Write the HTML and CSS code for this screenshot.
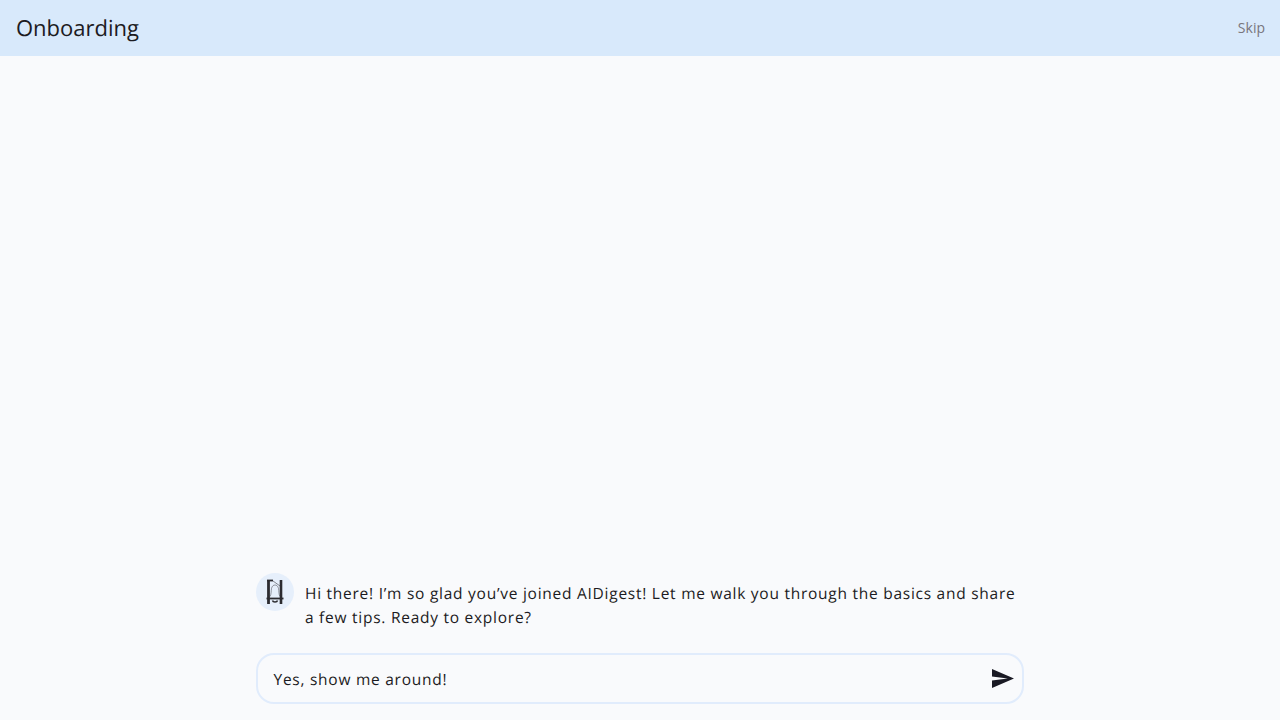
FILE: index.html
```html
<!DOCTYPE html>
<html lang="en">

<head>
    <meta charset="utf-8">
    <meta name="viewport" content="width=device-width, initial-scale=1.0">
    <title>Onboarding</title>
    <link rel="stylesheet" href="styles.css">
</head>

<body>
    <header class="topbar">
        <h1 class="topbar-title">Onboarding</h1>
        <button class="skip">Skip</button>
    </header>

    <main class="chat">
        <div class="message">
            <div class="avatar">
                <svg width="20" height="28" viewBox="0 0 20 28" fill="none" stroke="#2b2b30">
                    <path d="M3.5 2V26" stroke-width="2.8" />
                    <path d="M16 2V26" stroke-width="2.6" />
                    <path d="M2 2.5H8" stroke-width="1.8" />
                    <path d="M8 3L15 8" stroke-width="0.9" opacity="0.6" />
                    <path d="M5 18.5C6.5 16 6 13 6.5 10.5C7 8 8.5 7 10 7C11.5 7 13 8 13.5 10.5C14 13 13.5 16 15 18.5" stroke-width="1" opacity="0.45" />
                    <path d="M1.5 20.5H18.5" stroke-width="1.8" />
                    <path d="M7.5 22.5C8 24.5 12 24.5 12.5 22.5" stroke-width="1.6" />
                </svg>
            </div>
            <p class="message-text">Hi there! I’m so glad you’ve joined AIDigest! Let me walk you through the basics and share a few tips. Ready to explore?</p>
        </div>

        <form class="reply">
            <span class="reply-text">Yes, show me around!</span>
            <svg class="send" width="22" height="19" viewBox="2 3 21 18">
                <path d="M2 21L23 12L2 3V10L17 12L2 14Z" fill="#1a1a24" />
            </svg>
        </form>
    </main>
</body>

</html>
```

FILE: styles.css
```css
* {
    box-sizing: border-box;
}

html,
body {
    height: 100%;
}

body {
    margin: 0;
    display: flex;
    flex-direction: column;
    background-color: #f9fafc;
    color: #1c1b22;
    font-family: "Open Sans", sans-serif;
    text-rendering: geometricPrecision;
}

.topbar {
    display: flex;
    align-items: center;
    justify-content: space-between;
    height: 56px;
    padding: 0 15px 0 16px;
    background-color: #d8e9fb;
}

.topbar-title {
    margin: 0;
    font-size: 22px;
    font-weight: 400;
    line-height: 56px;
}

.skip {
    padding: 0 0 2px;
    border: 0;
    background: none;
    color: #79767d;
    font-family: inherit;
    font-size: 14px;
}

.chat {
    flex: 1;
    display: flex;
    flex-direction: column;
    justify-content: flex-end;
    gap: 24px;
    width: 768px;
    margin: 0 auto;
    padding-bottom: 16px;
}

.message {
    display: flex;
    gap: 11px;
}

.avatar {
    flex: none;
    display: flex;
    align-items: center;
    justify-content: center;
    width: 38px;
    height: 38px;
    border-radius: 50%;
    background-color: #e6effb;
}

.message-text {
    margin: 8px 0 0;
    font-size: 15.5px;
    line-height: 24px;
    letter-spacing: 0.74px;
}

.reply {
    display: flex;
    align-items: center;
    justify-content: space-between;
    height: 51px;
    padding: 0 8px 0 15.5px;
    border: 2px solid #e1ecfc;
    border-radius: 18px;
}

.reply-text {
    font-size: 15.5px;
    letter-spacing: 0.74px;
}

.send {
    flex: none;
}
```
